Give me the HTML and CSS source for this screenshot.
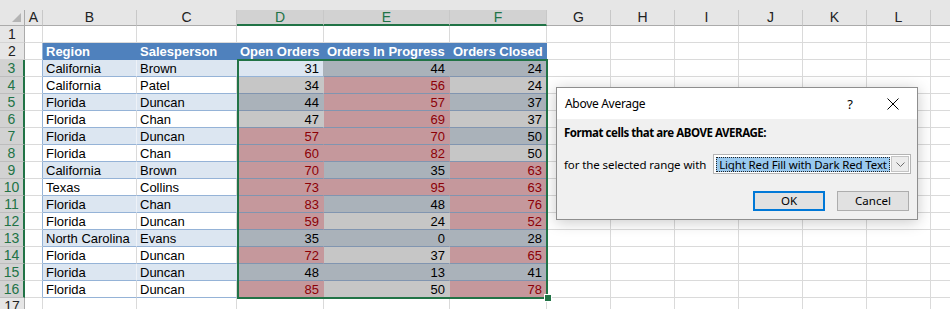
FILE: index.html
```html
<!DOCTYPE html>
<html>
<head>
<meta charset="utf-8">
<link rel="stylesheet" href="styles.css">
</head>
<body>
<div class="topbar"></div>
<div class="sheet">
  <div class="ch corner"><span class="tri"></span></div>
  <div class="ch">A</div><div class="ch">B</div><div class="ch">C</div>
  <div class="ch sel">D</div><div class="ch sel">E</div><div class="ch sel">F</div>
  <div class="ch">G</div><div class="ch">H</div><div class="ch">I</div><div class="ch">J</div><div class="ch">K</div><div class="ch">L</div><div class="ch"></div>

  <div class="rh">1</div><div class="c"></div><div class="c"></div><div class="c"></div><div class="c"></div><div class="c"></div><div class="c"></div><div class="c"></div><div class="c"></div><div class="c"></div><div class="c"></div><div class="c"></div><div class="c"></div><div class="c"></div>

  <div class="rh">2</div><div class="c ta"></div><div class="c th">Region</div><div class="c th">Salesperson</div><div class="c th">Open Orders</div><div class="c th">Orders In Progress</div><div class="c th">Orders Closed</div><div class="c"></div><div class="c"></div><div class="c"></div><div class="c"></div><div class="c"></div><div class="c"></div><div class="c"></div>

  <div class="rh sel">3</div><div class="c ta"></div><div class="c bd b">California</div><div class="c bd">Brown</div><div class="c n act">31</div><div class="c n sb">44</div><div class="c n sb">24</div><div class="c"></div><div class="c"></div><div class="c"></div><div class="c"></div><div class="c"></div><div class="c"></div><div class="c"></div>

  <div class="rh sel">4</div><div class="c ta"></div><div class="c wh b">California</div><div class="c wh">Patel</div><div class="c n sw">34</div><div class="c n rd">56</div><div class="c n sw">24</div><div class="c"></div><div class="c"></div><div class="c"></div><div class="c"></div><div class="c"></div><div class="c"></div><div class="c"></div>

  <div class="rh sel">5</div><div class="c ta"></div><div class="c bd b">Florida</div><div class="c bd">Duncan</div><div class="c n sb">44</div><div class="c n rd">57</div><div class="c n sb">37</div><div class="c"></div><div class="c"></div><div class="c"></div><div class="c"></div><div class="c"></div><div class="c"></div><div class="c"></div>

  <div class="rh sel">6</div><div class="c ta"></div><div class="c wh b">Florida</div><div class="c wh">Chan</div><div class="c n sw">47</div><div class="c n rd">69</div><div class="c n sw">37</div><div class="c"></div><div class="c"></div><div class="c"></div><div class="c"></div><div class="c"></div><div class="c"></div><div class="c"></div>

  <div class="rh sel">7</div><div class="c ta"></div><div class="c bd b">Florida</div><div class="c bd">Duncan</div><div class="c n rd">57</div><div class="c n rd">70</div><div class="c n sb">50</div><div class="c"></div><div class="c"></div><div class="c"></div><div class="c"></div><div class="c"></div><div class="c"></div><div class="c"></div>

  <div class="rh sel">8</div><div class="c ta"></div><div class="c wh b">Florida</div><div class="c wh">Chan</div><div class="c n rd">60</div><div class="c n rd">82</div><div class="c n sw">50</div><div class="c"></div><div class="c"></div><div class="c"></div><div class="c"></div><div class="c"></div><div class="c"></div><div class="c"></div>

  <div class="rh sel">9</div><div class="c ta"></div><div class="c bd b">California</div><div class="c bd">Brown</div><div class="c n rd">70</div><div class="c n sb">35</div><div class="c n rd">63</div><div class="c"></div><div class="c"></div><div class="c"></div><div class="c"></div><div class="c"></div><div class="c"></div><div class="c"></div>

  <div class="rh sel">10</div><div class="c ta"></div><div class="c wh b">Texas</div><div class="c wh">Collins</div><div class="c n rd">73</div><div class="c n rd">95</div><div class="c n rd">63</div><div class="c"></div><div class="c"></div><div class="c"></div><div class="c"></div><div class="c"></div><div class="c"></div><div class="c"></div>

  <div class="rh sel">11</div><div class="c ta"></div><div class="c bd b">Florida</div><div class="c bd">Chan</div><div class="c n rd">83</div><div class="c n sb">48</div><div class="c n rd">76</div><div class="c"></div><div class="c"></div><div class="c"></div><div class="c"></div><div class="c"></div><div class="c"></div><div class="c"></div>

  <div class="rh sel">12</div><div class="c ta"></div><div class="c wh b">Florida</div><div class="c wh">Duncan</div><div class="c n rd">59</div><div class="c n sw">24</div><div class="c n rd">52</div><div class="c"></div><div class="c"></div><div class="c"></div><div class="c"></div><div class="c"></div><div class="c"></div><div class="c"></div>

  <div class="rh sel">13</div><div class="c ta"></div><div class="c bd b">North Carolina</div><div class="c bd">Evans</div><div class="c n sb">35</div><div class="c n sb">0</div><div class="c n sb">28</div><div class="c"></div><div class="c"></div><div class="c"></div><div class="c"></div><div class="c"></div><div class="c"></div><div class="c"></div>

  <div class="rh sel">14</div><div class="c ta"></div><div class="c wh b">Florida</div><div class="c wh">Duncan</div><div class="c n rd">72</div><div class="c n sw">37</div><div class="c n rd">65</div><div class="c"></div><div class="c"></div><div class="c"></div><div class="c"></div><div class="c"></div><div class="c"></div><div class="c"></div>

  <div class="rh sel">15</div><div class="c ta"></div><div class="c bd b">Florida</div><div class="c bd">Duncan</div><div class="c n sb">48</div><div class="c n sb">13</div><div class="c n sb">41</div><div class="c"></div><div class="c"></div><div class="c"></div><div class="c"></div><div class="c"></div><div class="c"></div><div class="c"></div>

  <div class="rh sel">16</div><div class="c ta"></div><div class="c wh b">Florida</div><div class="c wh">Duncan</div><div class="c n rd">85</div><div class="c n sw">50</div><div class="c n rd">78</div><div class="c"></div><div class="c"></div><div class="c"></div><div class="c"></div><div class="c"></div><div class="c"></div><div class="c"></div>

  <div class="rh">17</div><div class="c"></div><div class="c"></div><div class="c"></div><div class="c"></div><div class="c"></div><div class="c"></div><div class="c"></div><div class="c"></div><div class="c"></div><div class="c"></div><div class="c"></div><div class="c"></div><div class="c"></div>

  <div class="selbox"></div>
  <div class="handle"></div>
</div>

<div class="dialog">
  <div class="dlg-title">
    <span class="dlg-name">Above Average</span>
    <span class="dlg-help">?</span>
    <svg class="dlg-close" width="12" height="12" viewBox="0 0 12 12"><path d="M0.5 0.5 L11.5 11.5 M11.5 0.5 L0.5 11.5" stroke="#000" stroke-width="1" fill="none"/></svg>
  </div>
  <div class="dlg-body">
    <div class="dlg-head">Format cells that are ABOVE AVERAGE:</div>
    <div class="dlg-row">
      <span class="dlg-label">for the selected range with</span>
      <div class="combo">
        <div class="combo-text"><span class="combo-sel">Light Red Fill with Dark Red Text</span></div>
        <div class="combo-btn"><svg width="9" height="5" viewBox="0 0 9 5"><path d="M0.5 0.5 L4.5 4.5 L8.5 0.5" stroke="#6d6d6d" stroke-width="1" fill="none"/></svg></div>
      </div>
    </div>
    <div class="dlg-btns">
      <div class="btn ok">OK</div>
      <div class="btn">Cancel</div>
    </div>
  </div>
</div>
</body>
</html>
```

FILE: styles.css
```css
* { box-sizing: border-box; margin: 0; padding: 0; }
html, body { width: 950px; height: 309px; overflow: hidden; background: #fff; }
body { font-family: "Liberation Sans", Arial, sans-serif; font-size: 13px; color: #000; position: relative; }

.topbar { height: 10px; background: #e6e6e6; }

.sheet {
  display: grid;
  grid-template-columns: 25px 18px 94px 100px 87px 126px 97px repeat(7, 64px);
  grid-template-rows: 16px;
  grid-auto-rows: 17px;
  position: relative;
  width: 995px;
}

.ch {
  background: #e6e6e6;
  border-right: 1px solid #c8c8c8;
  border-bottom: 1px solid #ababab;
  text-align: center;
  font-size: 14px;
  line-height: 15px;
  color: #222;
}
.ch.sel { background: #d2d2d2; color: #217346; border-bottom: 2px solid #217346; line-height: 14px; }
.corner { position: relative; border-right: 1px solid #ababab; }
.tri {
  position: absolute; right: 3px; bottom: 3px;
  width: 0; height: 0;
  border-left: 9px solid transparent;
  border-bottom: 9px solid #b4b4b4;
}

.rh {
  background: #e6e6e6;
  border-right: 1px solid #ababab;
  border-bottom: 1px solid #d4d4d4;
  text-align: center;
  font-size: 14px;
  line-height: 17px;
  color: #222;
}
.rh.sel { background: #d2d2d2; color: #217346; border-right: 2px solid #217346; border-bottom-color: #bdbdbd; }

.c {
  border-right: 1px solid #dadada;
  border-bottom: 1px solid #dadada;
  line-height: 18px;
  padding: 0 3px;
  white-space: nowrap;
  overflow: hidden;
}
.n { text-align: right; padding-right: 4px; }
.ta { border-right-color: #95b3d7; }

.th { background: #4f81bd; color: #fff; font-weight: bold; border-right-color: #4f81bd; border-bottom-color: #4f81bd; }
.bd { background: #dce6f1; border-right-color: #dce6f1; border-bottom-color: #95b3d7; }
.bd.b { border-right-color: #eef2f8; }
.wh { border-bottom-color: #95b3d7; }

.act { background: #dce6f1; border-right-color: #aab2ba; border-bottom-color: #95b3d7; }
.sb { background: #aab2ba; border-right-color: #aab2ba; border-bottom-color: #8195b0; }
.sw { background: #c6c6c6; border-right-color: #c6c6c6; border-bottom-color: #8195b0; }
.rd { background: #c5989c; color: #8c0006; border-right-color: #c5989c; border-bottom-color: #8195b0; }

.selbox {
  position: absolute;
  left: 237px; top: 49px;
  width: 311px; height: 240px;
  border: 2px solid #217346;
  pointer-events: none;
}
.handle {
  position: absolute;
  left: 544px; top: 284px;
  width: 8px; height: 8px;
  background: #217346;
  border: 1px solid #fff;
}

.dialog {
  position: absolute;
  left: 556px; top: 87px;
  width: 362px; height: 133px;
  border: 1px solid #8e8e8e;
  box-shadow: 0 2px 14px rgba(0,0,0,0.22);
  display: flex;
  flex-direction: column;
  font-family: "Noto Sans", "Open Sans", sans-serif;
  font-size: 11.5px;
  color: #000;
}
.dlg-title {
  height: 31px;
  background: #fff;
  display: flex;
  align-items: center;
  padding-left: 8px;
}
.dlg-name { flex: 1; font-size: 12px; letter-spacing: -0.3px; }
.dlg-help { font-size: 13px; margin-right: 34px; }
.dlg-close { margin-right: 18px; }

.dlg-body {
  flex: 1;
  background: #f0f0f0;
  padding: 5px 6px 0 7px;
  display: flex;
  flex-direction: column;
}
.dlg-head { font-weight: bold; line-height: 17px; letter-spacing: -0.45px; }
.dlg-row { display: flex; align-items: center; margin-top: 13px; height: 20px; }
.dlg-label { width: 150px; letter-spacing: -0.1px; }
.combo {
  display: flex;
  width: 199px; height: 20px;
  background: #fff;
  border: 1px solid #b4b4b4;
  padding: 1px;
}
.combo-text { flex: 1; padding: 1px; }
.combo-sel {
  display: block;
  height: 15px;
  line-height: 13px;
  background: #99c9ef;
  border: 1px dotted #222;
  padding-left: 2px;
  white-space: nowrap;
  overflow: hidden;
  letter-spacing: -0.15px;
}
.combo-btn {
  width: 18px;
  background: #ececec;
  border: 1px solid #c4c4c4;
  display: flex;
  align-items: center;
  justify-content: center;
}

.dlg-btns { display: flex; justify-content: flex-end; gap: 12px; margin-top: 17px; padding-right: 2px; }
.btn {
  width: 72px; height: 20px;
  background: #e1e1e1;
  border: 1px solid #adadad;
  text-align: center;
  line-height: 18px;
}
.btn.ok { border: 2px solid #0078d7; line-height: 16px; }
```
